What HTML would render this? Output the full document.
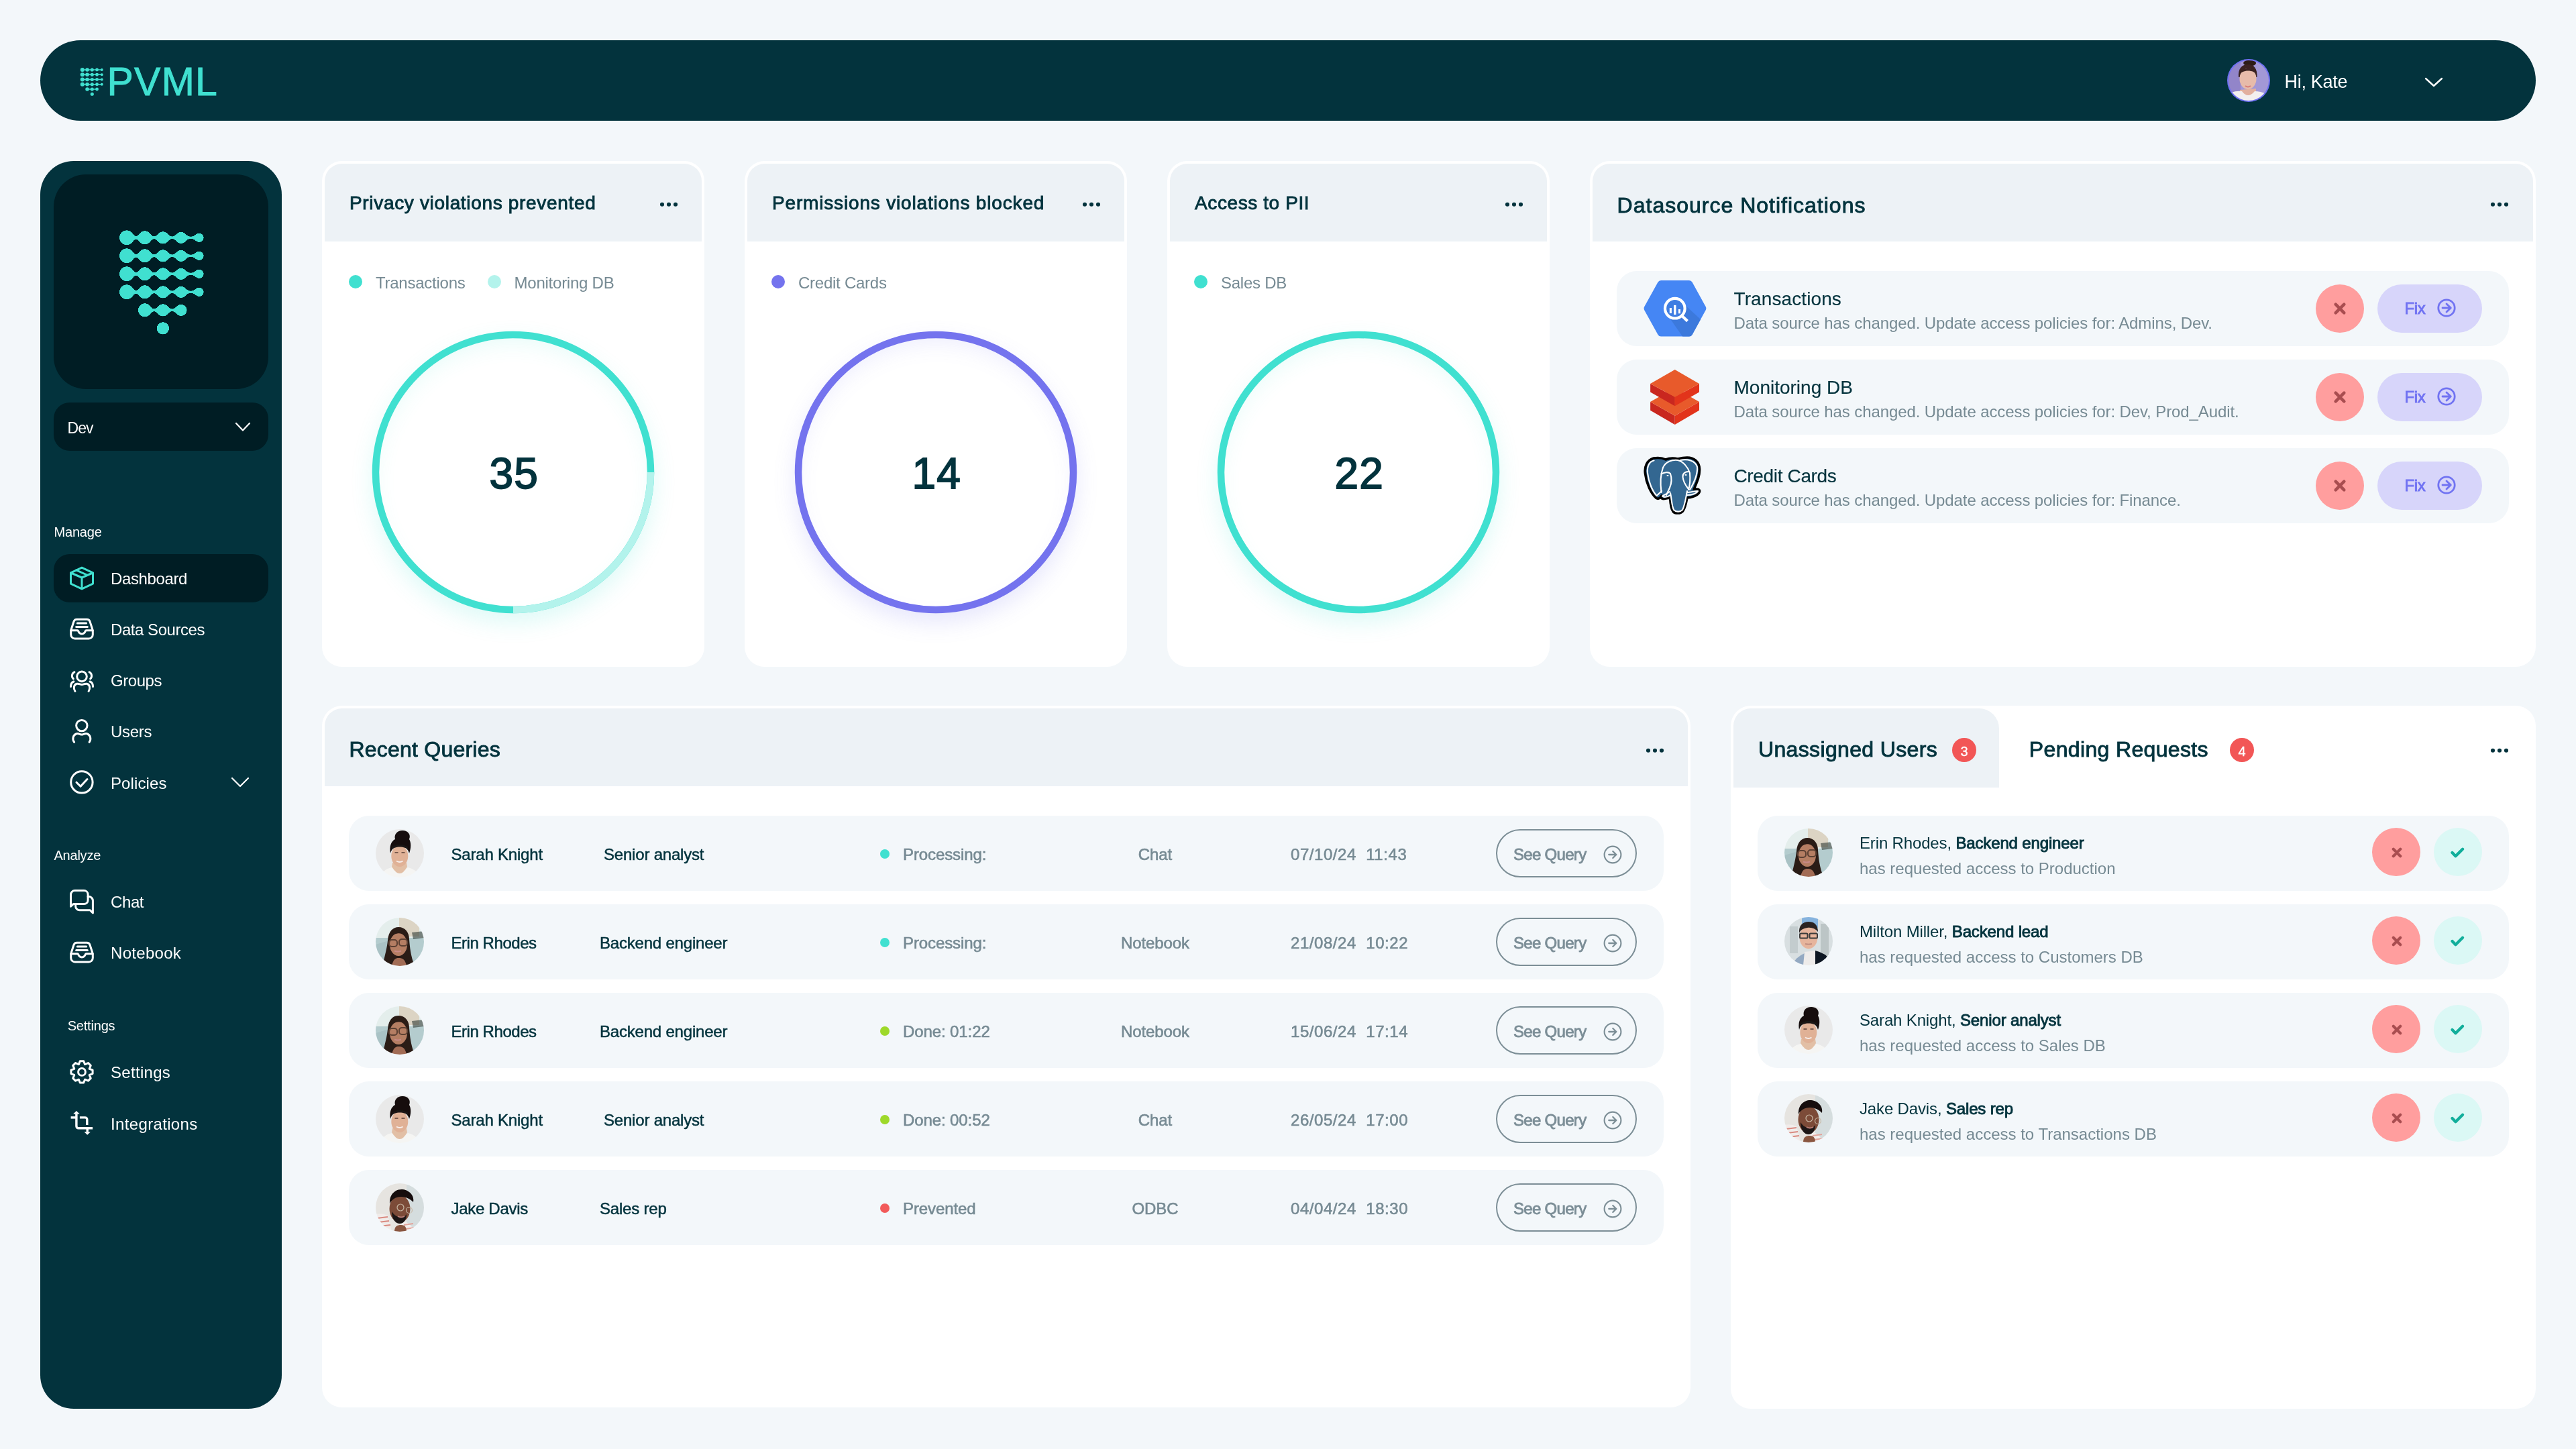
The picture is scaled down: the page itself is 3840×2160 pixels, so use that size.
<!DOCTYPE html>
<html><head><meta charset="utf-8"><title>PVML Dashboard</title>
<style>
html,body{margin:0;padding:0;}
body{width:3840px;height:2160px;background:#F3F7FA;position:relative;overflow:hidden;font-family:"Liberation Sans", sans-serif;}
.t{position:absolute;line-height:1;white-space:nowrap;}
</style></head><body><div id="root" style="position:absolute;left:0;top:0;width:3840px;height:2160px;will-change:transform">
<div style="position:absolute;left:60px;top:60px;width:3720px;height:120px;background:#03333D;border-radius:60px;"></div>
<svg style="position:absolute;left:100px;top:90px;overflow:visible;" width="70" height="70" viewBox="0 0 70 70"><g><line x1="22.80" y1="14.00" x2="30.05" y2="14.00" stroke="#40E0D0" stroke-width="1.5"/><line x1="30.05" y1="14.00" x2="37.30" y2="14.00" stroke="#40E0D0" stroke-width="1.5"/><line x1="37.30" y1="14.00" x2="44.55" y2="14.00" stroke="#40E0D0" stroke-width="1.5"/><line x1="44.55" y1="14.00" x2="51.80" y2="14.00" stroke="#40E0D0" stroke-width="1.5"/><circle cx="22.80" cy="14.00" r="3.05" fill="#40E0D0"/><circle cx="30.05" cy="14.00" r="2.80" fill="#40E0D0"/><circle cx="37.30" cy="14.00" r="2.55" fill="#40E0D0"/><circle cx="44.55" cy="14.00" r="2.40" fill="#40E0D0"/><circle cx="51.80" cy="14.00" r="2.00" fill="#40E0D0"/><line x1="22.80" y1="21.25" x2="30.05" y2="21.25" stroke="#40E0D0" stroke-width="1.5"/><line x1="30.05" y1="21.25" x2="37.30" y2="21.25" stroke="#40E0D0" stroke-width="1.5"/><line x1="37.30" y1="21.25" x2="44.55" y2="21.25" stroke="#40E0D0" stroke-width="1.5"/><line x1="44.55" y1="21.25" x2="51.80" y2="21.25" stroke="#40E0D0" stroke-width="1.5"/><circle cx="22.80" cy="21.25" r="3.05" fill="#40E0D0"/><circle cx="30.05" cy="21.25" r="2.80" fill="#40E0D0"/><circle cx="37.30" cy="21.25" r="2.55" fill="#40E0D0"/><circle cx="44.55" cy="21.25" r="2.40" fill="#40E0D0"/><circle cx="51.80" cy="21.25" r="2.00" fill="#40E0D0"/><line x1="22.80" y1="28.50" x2="30.05" y2="28.50" stroke="#40E0D0" stroke-width="1.5"/><line x1="30.05" y1="28.50" x2="37.30" y2="28.50" stroke="#40E0D0" stroke-width="1.5"/><line x1="37.30" y1="28.50" x2="44.55" y2="28.50" stroke="#40E0D0" stroke-width="1.5"/><line x1="44.55" y1="28.50" x2="51.80" y2="28.50" stroke="#40E0D0" stroke-width="1.5"/><circle cx="22.80" cy="28.50" r="3.05" fill="#40E0D0"/><circle cx="30.05" cy="28.50" r="2.80" fill="#40E0D0"/><circle cx="37.30" cy="28.50" r="2.55" fill="#40E0D0"/><circle cx="44.55" cy="28.50" r="2.40" fill="#40E0D0"/><circle cx="51.80" cy="28.50" r="2.00" fill="#40E0D0"/><line x1="22.80" y1="35.75" x2="30.05" y2="35.75" stroke="#40E0D0" stroke-width="1.5"/><line x1="30.05" y1="35.75" x2="37.30" y2="35.75" stroke="#40E0D0" stroke-width="1.5"/><line x1="37.30" y1="35.75" x2="44.55" y2="35.75" stroke="#40E0D0" stroke-width="1.5"/><line x1="44.55" y1="35.75" x2="51.80" y2="35.75" stroke="#40E0D0" stroke-width="1.5"/><circle cx="22.80" cy="35.75" r="3.05" fill="#40E0D0"/><circle cx="30.05" cy="35.75" r="2.80" fill="#40E0D0"/><circle cx="37.30" cy="35.75" r="2.55" fill="#40E0D0"/><circle cx="44.55" cy="35.75" r="2.40" fill="#40E0D0"/><circle cx="51.80" cy="35.75" r="2.00" fill="#40E0D0"/><line x1="30.05" y1="43.00" x2="37.30" y2="43.00" stroke="#40E0D0" stroke-width="1.5"/><line x1="37.30" y1="43.00" x2="44.55" y2="43.00" stroke="#40E0D0" stroke-width="1.5"/><circle cx="30.05" cy="43.00" r="2.80" fill="#40E0D0"/><circle cx="37.30" cy="43.00" r="2.55" fill="#40E0D0"/><circle cx="44.55" cy="43.00" r="2.40" fill="#40E0D0"/><circle cx="37.30" cy="50.25" r="2.55" fill="#40E0D0"/></g></svg>
<div class="t" style="left:159.50px;top:93.06px;font-size:59px;color:#40E0D0;letter-spacing:1.23px;-webkit-text-stroke:0.9px #40E0D0;">PVML</div>
<svg style="position:absolute;left:3320px;top:88px" width="64" height="64" viewBox="0 0 64 64"><defs><clipPath id="ck"><circle cx="32" cy="32" r="30"/></clipPath><filter id="fk"><feGaussianBlur stdDeviation="0.5"/></filter></defs><circle cx="32" cy="32" r="32" fill="#6F70F2"/><g clip-path="url(#ck)"><g filter="url(#fk)"><rect width="64" height="64" fill="#A398D6"/><rect width="20" height="64" fill="#9285C9"/><ellipse cx="33.6" cy="6" rx="9.5" ry="4.5" fill="#2E1A16"/><path d="M17 27 C16 14 22 8 31 8 C40 8 45 14 44.5 27Z" fill="#3A2420"/><path d="M19 46 L19 56 L43 56 L43 44Z" fill="#E2AF9E"/><ellipse cx="31" cy="29.5" rx="12.5" ry="15.6" fill="#E7BBAA"/><path d="M18.5 24 C21 16 40 15 44 24 L44 20 C40 12 22 12 18 21Z" fill="#3A2420"/><path d="M27 40 Q31 43 35 40" stroke="#D77C78" stroke-width="2" fill="none"/><path d="M2 64 L6 50 Q14 47 22 48 Q31 60 41 48 Q50 48 58 52 L62 64Z" fill="#F3EFEF"/></g></g></svg>
<div class="t" style="left:3405.50px;top:109.44px;font-size:27px;color:#FFFFFF;letter-spacing:-0.3px;">Hi, Kate</div>
<svg style="position:absolute;left:3614px;top:115px;overflow:visible;" width="28" height="16" viewBox="0 0 28 16"><path d="M2 2 L14 13 L26 2" fill="none" stroke="#fff" stroke-width="2.4" stroke-linecap="round" stroke-linejoin="round"/></svg>
<div style="position:absolute;left:60px;top:240px;width:360px;height:1860px;background:#03333D;border-radius:50px;"></div>
<div style="position:absolute;left:80px;top:260px;width:320px;height:320px;background:#001D24;border-radius:48px;"></div>
<svg style="position:absolute;left:140px;top:320px;overflow:visible;" width="200" height="200" viewBox="0 0 200 200"><defs><filter id="goo2" x="-20%" y="-20%" width="140%" height="140%"><feGaussianBlur stdDeviation="2.6"/><feColorMatrix values="1 0 0 0 0  0 1 0 0 0  0 0 1 0 0  0 0 0 24 -11"/></filter></defs><g filter="url(#goo2)"><line x1="48.90" y1="34.30" x2="75.90" y2="34.30" stroke="#40E0D0" stroke-width="4.0"/><line x1="75.90" y1="34.30" x2="102.90" y2="34.30" stroke="#40E0D0" stroke-width="4.0"/><line x1="102.90" y1="34.30" x2="129.90" y2="34.30" stroke="#40E0D0" stroke-width="4.0"/><line x1="129.90" y1="34.30" x2="156.90" y2="34.30" stroke="#40E0D0" stroke-width="4.0"/><circle cx="48.90" cy="34.30" r="11.00" fill="#40E0D0"/><circle cx="75.90" cy="34.30" r="10.20" fill="#40E0D0"/><circle cx="102.90" cy="34.30" r="9.40" fill="#40E0D0"/><circle cx="129.90" cy="34.30" r="8.90" fill="#40E0D0"/><circle cx="156.90" cy="34.30" r="7.00" fill="#40E0D0"/><line x1="48.90" y1="61.30" x2="75.90" y2="61.30" stroke="#40E0D0" stroke-width="4.0"/><line x1="75.90" y1="61.30" x2="102.90" y2="61.30" stroke="#40E0D0" stroke-width="4.0"/><line x1="102.90" y1="61.30" x2="129.90" y2="61.30" stroke="#40E0D0" stroke-width="4.0"/><line x1="129.90" y1="61.30" x2="156.90" y2="61.30" stroke="#40E0D0" stroke-width="4.0"/><circle cx="48.90" cy="61.30" r="11.00" fill="#40E0D0"/><circle cx="75.90" cy="61.30" r="10.20" fill="#40E0D0"/><circle cx="102.90" cy="61.30" r="9.40" fill="#40E0D0"/><circle cx="129.90" cy="61.30" r="8.90" fill="#40E0D0"/><circle cx="156.90" cy="61.30" r="7.00" fill="#40E0D0"/><line x1="48.90" y1="88.30" x2="75.90" y2="88.30" stroke="#40E0D0" stroke-width="4.0"/><line x1="75.90" y1="88.30" x2="102.90" y2="88.30" stroke="#40E0D0" stroke-width="4.0"/><line x1="102.90" y1="88.30" x2="129.90" y2="88.30" stroke="#40E0D0" stroke-width="4.0"/><line x1="129.90" y1="88.30" x2="156.90" y2="88.30" stroke="#40E0D0" stroke-width="4.0"/><circle cx="48.90" cy="88.30" r="11.00" fill="#40E0D0"/><circle cx="75.90" cy="88.30" r="10.20" fill="#40E0D0"/><circle cx="102.90" cy="88.30" r="9.40" fill="#40E0D0"/><circle cx="129.90" cy="88.30" r="8.90" fill="#40E0D0"/><circle cx="156.90" cy="88.30" r="7.00" fill="#40E0D0"/><line x1="48.90" y1="115.30" x2="75.90" y2="115.30" stroke="#40E0D0" stroke-width="4.0"/><line x1="75.90" y1="115.30" x2="102.90" y2="115.30" stroke="#40E0D0" stroke-width="4.0"/><line x1="102.90" y1="115.30" x2="129.90" y2="115.30" stroke="#40E0D0" stroke-width="4.0"/><line x1="129.90" y1="115.30" x2="156.90" y2="115.30" stroke="#40E0D0" stroke-width="4.0"/><circle cx="48.90" cy="115.30" r="11.00" fill="#40E0D0"/><circle cx="75.90" cy="115.30" r="10.20" fill="#40E0D0"/><circle cx="102.90" cy="115.30" r="9.40" fill="#40E0D0"/><circle cx="129.90" cy="115.30" r="8.90" fill="#40E0D0"/><circle cx="156.90" cy="115.30" r="7.00" fill="#40E0D0"/><line x1="75.90" y1="142.30" x2="102.90" y2="142.30" stroke="#40E0D0" stroke-width="4.0"/><line x1="102.90" y1="142.30" x2="129.90" y2="142.30" stroke="#40E0D0" stroke-width="4.0"/><circle cx="75.90" cy="142.30" r="10.20" fill="#40E0D0"/><circle cx="102.90" cy="142.30" r="9.40" fill="#40E0D0"/><circle cx="129.90" cy="142.30" r="8.90" fill="#40E0D0"/><circle cx="102.90" cy="169.30" r="9.40" fill="#40E0D0"/></g></svg>
<div style="position:absolute;left:80px;top:600px;width:320px;height:72px;background:#001D24;border-radius:24px;"></div>
<div class="t" style="left:100.50px;top:626.53px;font-size:23px;color:#FFFFFF;letter-spacing:-0.9px;">Dev</div>
<svg style="position:absolute;left:350px;top:629px;overflow:visible;" width="24" height="16" viewBox="0 0 24 16"><path d="M2 2 L12 12.5 L22 2" fill="none" stroke="#fff" stroke-width="2.2" stroke-linecap="round" stroke-linejoin="round"/></svg>
<div class="t" style="left:80.50px;top:783.37px;font-size:20px;color:#FFFFFF;letter-spacing:-0.2px;">Manage</div>
<div style="position:absolute;left:80px;top:826px;width:320px;height:72px;background:#001D24;border-radius:24px;"></div>
<svg style="position:absolute;left:104px;top:844px;overflow:visible" width="36" height="36" viewBox="0 0 36 36" fill="none" stroke="#40E0D0" stroke-width="3" stroke-linecap="round" stroke-linejoin="round"><path d="M18 2.2L34.5 9.9V26.1L18 33.8L1.5 26.1V9.9Z"/><path d="M1.8 10L18 17L34.2 10"/><path d="M18 17V33.5"/><path d="M9.6 5.9L25.6 13"/></svg>
<div class="t" style="left:165.00px;top:851.38px;font-size:24px;color:#FFFFFF;letter-spacing:-0.38px;">Dashboard</div>
<svg style="position:absolute;left:104px;top:920px;overflow:visible" width="36" height="36" viewBox="0 0 36 36" fill="none" stroke="#FFFFFF" stroke-width="3" stroke-linecap="round" stroke-linejoin="round"><path d="M10.5 3.3H25.5C27.8 3.3 29.3 4.5 30 6.5L33.6 17.5C34 18.6 34.3 19.6 34.3 20.8V26C34.3 29.4 31.6 32 28.3 32H7.7C4.4 32 1.7 29.4 1.7 26V20.8C1.7 19.6 2 18.6 2.4 17.5L6 6.5C6.7 4.5 8.2 3.3 10.5 3.3Z"/><path d="M1.8 19.8H11.5C12 19.8 12.5 20.2 12.7 20.8C13.5 23.2 15.5 24.9 18 24.9C20.5 24.9 22.5 23.2 23.3 20.8C23.5 20.2 24 19.8 24.5 19.8H34.2"/><path d="M11.3 9H24.7"/><path d="M9.7 14.5H26.3"/></svg>
<div class="t" style="left:165.00px;top:927.28px;font-size:24px;color:#FFFFFF;letter-spacing:-0.45px;">Data Sources</div>
<svg style="position:absolute;left:104px;top:996px;overflow:visible" width="36" height="36" viewBox="0 0 36 36" fill="none" stroke="#FFFFFF" stroke-width="3" stroke-linecap="round" stroke-linejoin="round"><circle cx="18" cy="12.4" r="7.3"/><path d="M7.9 34.5C5.2 30 5.8 24.8 10.5 23.3C13.5 22.5 15.5 24.6 18 24.6C20.5 24.6 22.5 22.5 25.5 23.3C30.2 24.8 30.8 30 28.1 34.5"/><path d="M6.9 5.9C3 7.5 2.2 13 5.3 15.9"/><path d="M29.1 5.9C33 7.5 33.8 13 30.7 15.9"/><path d="M5.9 20C3 21 1.5 24 1.5 27.5"/><path d="M30.1 20C33 21 34.5 24 34.5 27.5"/></svg>
<div class="t" style="left:165.00px;top:1003.18px;font-size:24px;color:#FFFFFF;letter-spacing:-0.45px;">Groups</div>
<svg style="position:absolute;left:104px;top:1072px;overflow:visible" width="36" height="36" viewBox="0 0 36 36" fill="none" stroke="#FFFFFF" stroke-width="3" stroke-linecap="round" stroke-linejoin="round"><circle cx="17.85" cy="9.6" r="8.2"/><path d="M6.6 34.3C3.5 30.5 4.5 23.5 10 21.7C13 20.8 15.5 23.1 17.85 23.1C20.2 23.1 22.7 20.8 25.7 21.7C31.2 23.5 32.2 30.5 29.1 34.3"/></svg>
<div class="t" style="left:165.00px;top:1079.38px;font-size:24px;color:#FFFFFF;letter-spacing:-0.3px;">Users</div>
<svg style="position:absolute;left:104px;top:1148px;overflow:visible" width="36" height="36" viewBox="0 0 36 36" fill="none" stroke="#FFFFFF" stroke-width="3" stroke-linecap="round" stroke-linejoin="round"><circle cx="17.9" cy="17.9" r="16.2"/><path d="M10 18.2L16.1 24.3L26 13.6"/></svg>
<div class="t" style="left:165.00px;top:1155.68px;font-size:24px;color:#FFFFFF;letter-spacing:0.1px;">Policies</div>
<svg style="position:absolute;left:344px;top:1158px;overflow:visible;" width="28" height="18" viewBox="0 0 28 18"><path d="M2 2 L14 14 L26 2" fill="none" stroke="#fff" stroke-width="2.2" stroke-linecap="round" stroke-linejoin="round"/></svg>
<div class="t" style="left:80.40px;top:1265.47px;font-size:20px;color:#FFFFFF;letter-spacing:-0.2px;">Analyze</div>
<svg style="position:absolute;left:104px;top:1326px;overflow:visible" width="36" height="36" viewBox="0 0 36 36" fill="none" stroke="#FFFFFF" stroke-width="3" stroke-linecap="round" stroke-linejoin="round"><path d="M1.5 25.2V7.5C1.5 4.2 4.2 1.6 7.5 1.6H21.2C24.5 1.6 27.1 4.2 27.1 7.5V15.7C27.1 19 24.5 21.6 21.2 21.6H5.3Z"/><path d="M27.1 10.6H28.4C31.7 10.6 34.4 13.3 34.4 16.6V35L30.2 30.8H14.7C11.4 30.8 8.7 28.2 8.7 24.9V21.6"/></svg>
<div class="t" style="left:165.00px;top:1333.48px;font-size:24px;color:#FFFFFF;letter-spacing:-0.4px;">Chat</div>
<svg style="position:absolute;left:104px;top:1402px;overflow:visible" width="36" height="36" viewBox="0 0 36 36" fill="none" stroke="#FFFFFF" stroke-width="3" stroke-linecap="round" stroke-linejoin="round"><path d="M10.5 3.3H25.5C27.8 3.3 29.3 4.5 30 6.5L33.6 17.5C34 18.6 34.3 19.6 34.3 20.8V26C34.3 29.4 31.6 32 28.3 32H7.7C4.4 32 1.7 29.4 1.7 26V20.8C1.7 19.6 2 18.6 2.4 17.5L6 6.5C6.7 4.5 8.2 3.3 10.5 3.3Z"/><path d="M1.8 19.8H11.5C12 19.8 12.5 20.2 12.7 20.8C13.5 23.2 15.5 24.9 18 24.9C20.5 24.9 22.5 23.2 23.3 20.8C23.5 20.2 24 19.8 24.5 19.8H34.2"/><path d="M11.3 9H24.7"/><path d="M9.7 14.5H26.3"/></svg>
<div class="t" style="left:165.00px;top:1409.48px;font-size:24px;color:#FFFFFF;letter-spacing:0.3px;">Notebook</div>
<div class="t" style="left:100.70px;top:1519.27px;font-size:20px;color:#FFFFFF;letter-spacing:-0.2px;">Settings</div>
<svg style="position:absolute;left:104px;top:1580px;overflow:visible" width="36" height="36" viewBox="0 0 36 36" fill="none" stroke="#FFFFFF" stroke-width="3" stroke-linecap="round" stroke-linejoin="round"><path d="M13.43 6.59 L15.31 1.82 L20.69 1.82 L22.57 6.59 L22.77 6.67 L27.47 4.63 L31.27 8.43 L29.23 13.13 L29.31 13.33 L34.08 15.21 L34.08 20.59 L29.31 22.47 L29.23 22.67 L31.27 27.37 L27.47 31.17 L22.77 29.13 L22.57 29.21 L20.69 33.98 L15.31 33.98 L13.43 29.21 L13.23 29.13 L8.53 31.17 L4.73 27.37 L6.77 22.67 L6.69 22.47 L1.92 20.59 L1.92 15.21 L6.69 13.33 L6.77 13.13 L4.73 8.43 L8.53 4.63 L13.23 6.67Z"/><circle cx="18" cy="17.9" r="5.4"/></svg>
<div class="t" style="left:165.00px;top:1587.28px;font-size:24px;color:#FFFFFF;letter-spacing:0.3px;">Settings</div>
<svg style="position:absolute;left:104px;top:1656px;overflow:visible" width="36" height="36" viewBox="0 0 36 36" fill="none" stroke="#FFFFFF" stroke-width="3" stroke-linecap="round" stroke-linejoin="round"><g stroke-width="3.4" stroke-linecap="butt"><path d="M9.9 4.4V22.8C9.9 24.5 11.2 25.8 12.9 25.8H34.1"/><path d="M1.6 9.9H9.9"/><path d="M14.9 9.9H22.8C24.5 9.9 25.8 11.2 25.8 12.9V21"/><path d="M26.2 25.8V31.5"/></g><path d="M5.1 4.7L9.9 -0.1L14.8 4.7Z" fill="#fff" stroke="none"/><path d="M21.5 31.2L26.2 35.8L30.9 31.2Z" fill="#fff" stroke="none"/></svg>
<div class="t" style="left:165.00px;top:1663.68px;font-size:24px;color:#FFFFFF;letter-spacing:0.35px;">Integrations</div>
<div style="position:absolute;left:480px;top:240px;width:570px;height:754px;background:#fff;border-radius:30px;"></div>
<div style="position:absolute;left:484px;top:244px;width:562px;height:116px;background:#EDF2F6;border-radius:26px 26px 0 0;"></div>
<div class="t" style="left:521.00px;top:289.10px;font-size:28px;color:#03333D;letter-spacing:0.67px;-webkit-text-stroke:0.9px #03333D;">Privacy violations prevented</div>
<svg style="position:absolute;left:984px;top:299px;overflow:visible;" width="28" height="10" viewBox="0 0 28 10"><circle cx="3.0" cy="5.7" r="3.05" fill="#03333D"/><circle cx="13.0" cy="5.7" r="3.05" fill="#03333D"/><circle cx="23.0" cy="5.7" r="3.05" fill="#03333D"/></svg>
<div style="position:absolute;left:520px;top:410px;width:20px;height:20px;background:#40E0D0;border-radius:50%;"></div>
<div class="t" style="left:560.00px;top:410.18px;font-size:24px;color:#768A93;letter-spacing:-0.25px;">Transactions</div>
<div style="position:absolute;left:726.6px;top:410px;width:20px;height:20px;background:#B3F3EC;border-radius:50%;"></div>
<div class="t" style="left:766.60px;top:410.18px;font-size:24px;color:#768A93;letter-spacing:-0.25px;">Monitoring DB</div>
<div style="position:absolute;left:555.2px;top:494px;width:420px;height:420px;border-radius:50%;box-shadow:0 14px 32px #40E0D02c, inset 0 14px 34px #40E0D024;"></div>
<svg style="position:absolute;left:550.2px;top:489px;overflow:visible;" width="430" height="430" viewBox="0 0 430 430"><circle cx="215" cy="215" r="205" fill="none" stroke="#40E0D0" stroke-width="10.5"/><path d="M420 215 A205 205 0 0 1 215 420" fill="none" stroke="#B3F3EC" stroke-width="10.5"/></svg>
<div class="t" style="left:616.20px;top:673.82px;font-size:64px;color:#03333D;letter-spacing:1px;-webkit-text-stroke:1.8px #03333D;width:300px;text-align:center;">35</div>
<div style="position:absolute;left:1110px;top:240px;width:570px;height:754px;background:#fff;border-radius:30px;"></div>
<div style="position:absolute;left:1114px;top:244px;width:562px;height:116px;background:#EDF2F6;border-radius:26px 26px 0 0;"></div>
<div class="t" style="left:1151.00px;top:289.10px;font-size:28px;color:#03333D;letter-spacing:0.83px;-webkit-text-stroke:0.9px #03333D;">Permissions violations blocked</div>
<svg style="position:absolute;left:1614px;top:299px;overflow:visible;" width="28" height="10" viewBox="0 0 28 10"><circle cx="3.0" cy="5.7" r="3.05" fill="#03333D"/><circle cx="13.0" cy="5.7" r="3.05" fill="#03333D"/><circle cx="23.0" cy="5.7" r="3.05" fill="#03333D"/></svg>
<div style="position:absolute;left:1150px;top:410px;width:20px;height:20px;background:#7473EE;border-radius:50%;"></div>
<div class="t" style="left:1190.00px;top:410.18px;font-size:24px;color:#768A93;letter-spacing:-0.25px;">Credit Cards</div>
<div style="position:absolute;left:1185.2px;top:494px;width:420px;height:420px;border-radius:50%;box-shadow:0 14px 32px #7473EE2c, inset 0 14px 34px #7473EE24;"></div>
<svg style="position:absolute;left:1180.2px;top:489px;overflow:visible;" width="430" height="430" viewBox="0 0 430 430"><circle cx="215" cy="215" r="205" fill="none" stroke="#7473EE" stroke-width="10.5"/></svg>
<div class="t" style="left:1246.20px;top:673.82px;font-size:64px;color:#03333D;letter-spacing:1px;-webkit-text-stroke:1.8px #03333D;width:300px;text-align:center;">14</div>
<div style="position:absolute;left:1740px;top:240px;width:570px;height:754px;background:#fff;border-radius:30px;"></div>
<div style="position:absolute;left:1744px;top:244px;width:562px;height:116px;background:#EDF2F6;border-radius:26px 26px 0 0;"></div>
<div class="t" style="left:1781.00px;top:289.10px;font-size:28px;color:#03333D;letter-spacing:0.6px;-webkit-text-stroke:0.9px #03333D;">Access to PII</div>
<svg style="position:absolute;left:2244px;top:299px;overflow:visible;" width="28" height="10" viewBox="0 0 28 10"><circle cx="3.0" cy="5.7" r="3.05" fill="#03333D"/><circle cx="13.0" cy="5.7" r="3.05" fill="#03333D"/><circle cx="23.0" cy="5.7" r="3.05" fill="#03333D"/></svg>
<div style="position:absolute;left:1780px;top:410px;width:20px;height:20px;background:#40E0D0;border-radius:50%;"></div>
<div class="t" style="left:1820.00px;top:410.18px;font-size:24px;color:#768A93;letter-spacing:-0.25px;">Sales DB</div>
<div style="position:absolute;left:1815.2px;top:494px;width:420px;height:420px;border-radius:50%;box-shadow:0 14px 32px #40E0D02c, inset 0 14px 34px #40E0D024;"></div>
<svg style="position:absolute;left:1810.2px;top:489px;overflow:visible;" width="430" height="430" viewBox="0 0 430 430"><circle cx="215" cy="215" r="205" fill="none" stroke="#40E0D0" stroke-width="10.5"/></svg>
<div class="t" style="left:1876.20px;top:673.82px;font-size:64px;color:#03333D;letter-spacing:1px;-webkit-text-stroke:1.8px #03333D;width:300px;text-align:center;">22</div>
<div style="position:absolute;left:2370px;top:240px;width:1410px;height:754px;background:#fff;border-radius:30px;"></div>
<div style="position:absolute;left:2374px;top:244px;width:1402px;height:116px;background:#EDF2F6;border-radius:26px 26px 0 0;"></div>
<div class="t" style="left:2410.60px;top:289.51px;font-size:32px;color:#03333D;letter-spacing:1.0px;-webkit-text-stroke:0.9px #03333D;">Datasource Notifications</div>
<svg style="position:absolute;left:3713px;top:299px;overflow:visible;" width="28" height="10" viewBox="0 0 28 10"><circle cx="3.0" cy="5.7" r="3.05" fill="#03333D"/><circle cx="13.0" cy="5.7" r="3.05" fill="#03333D"/><circle cx="23.0" cy="5.7" r="3.05" fill="#03333D"/></svg>
<div style="position:absolute;left:2410px;top:404px;width:1330px;height:112px;background:#F3F7FA;border-radius:30px;"></div>
<svg style="position:absolute;left:2445px;top:410px" width="105" height="100" viewBox="0 0 105 100"><defs><clipPath id="hexc"><path d="M31 7.9 H73 Q76 7.9 77.5 10.5 L97.6 47 Q99.1 49.7 97.6 52.4 L77.5 88.9 Q76 91.5 73 91.5 H31 Q28 91.5 26.5 88.9 L6.3 52.4 Q4.8 49.7 6.3 47 L26.5 10.5 Q28 7.9 31 7.9Z"/></clipPath></defs><g clip-path="url(#hexc)"><rect width="105" height="100" fill="#4586F4"/><path d="M66.3 44.2 L105 80 L105 100 L69 100 L44.9 65.6Z" fill="#3C79DC"/></g><circle cx="51.8" cy="49.7" r="12.8" fill="#3F7DE2"/><circle cx="51.8" cy="49.7" r="14.8" fill="none" stroke="#fff" stroke-width="4.2"/><path d="M63 61.5 L70.5 68.6" stroke="#fff" stroke-width="4.2" stroke-linecap="butt"/><rect x="43.8" y="49" width="3.1" height="8" fill="#fff"/><rect x="50" y="44.9" width="3.5" height="14.1" fill="#fff"/><rect x="57" y="51" width="3" height="6.3" fill="#fff"/></svg>
<div class="t" style="left:2584.50px;top:432.00px;font-size:28px;color:#03333D;letter-spacing:0.1px;-webkit-text-stroke:0.15px #03333D;">Transactions</div>
<div class="t" style="left:2584.50px;top:470.18px;font-size:24px;color:#768A93;letter-spacing:-0.1px;">Data source has changed. Update access policies for: Admins, Dev.</div>
<div style="position:absolute;left:3452px;top:424px;width:72px;height:72px;background:#FF9E9E;border-radius:50%;"></div>
<svg style="position:absolute;left:3476px;top:448px;overflow:visible;" width="24" height="24" viewBox="0 0 24 24"><path d="M5.7 5.7 L18.3 18.3 M18.3 5.7 L5.7 18.3" stroke="#A94D50" stroke-width="4.6" stroke-linecap="round"/></svg>
<div style="position:absolute;left:3544px;top:424px;width:156px;height:72px;background:#D7D5FA;border-radius:36px;"></div>
<div class="t" style="left:3584.50px;top:447.68px;font-size:24px;color:#7173F2;letter-spacing:-0.4px;-webkit-text-stroke:0.9px #7173F2;">Fix</div>
<svg style="position:absolute;left:3633.3px;top:445.4px;overflow:visible;" width="28" height="28" viewBox="0 0 28 28"><circle cx="14" cy="14" r="12.2" fill="none" stroke="#7173F2" stroke-width="2.8"/><path d="M8 14h12.3M14 8l6.3 6l-6.3 6" fill="none" stroke="#7173F2" stroke-width="2.8" stroke-linecap="round" stroke-linejoin="round"/></svg>
<div style="position:absolute;left:2410px;top:536px;width:1330px;height:112px;background:#F3F7FA;border-radius:30px;"></div>
<svg style="position:absolute;left:2450px;top:540px" width="95" height="105" viewBox="0 0 95 105"><path d="M10.1 59 L46.7 79.7 V93.1 L10.1 71.7Z" fill="#C9271F"/><path d="M46.7 79.7 L83 59 V71.7 L46.7 93.1Z" fill="#E2341B"/><path d="M46.7 38.3 L83 59 L46.7 79.7 L10.1 59Z" fill="#E85A2B"/><path d="M10.1 31.9 L46.7 51.8 V65.2 L10.1 44.6Z" fill="#C9271F"/><path d="M46.7 51.8 L83 31.9 V44.6 L46.7 65.2Z" fill="#E2341B"/><path d="M46.7 10.9 L83 31.9 L46.7 51.8 L10.1 31.9Z" fill="#E85A2B"/></svg>
<div class="t" style="left:2584.50px;top:564.00px;font-size:28px;color:#03333D;-webkit-text-stroke:0.15px #03333D;">Monitoring DB</div>
<div class="t" style="left:2584.50px;top:602.18px;font-size:24px;color:#768A93;letter-spacing:-0.1px;">Data source has changed. Update access policies for: Dev, Prod_Audit.</div>
<div style="position:absolute;left:3452px;top:556px;width:72px;height:72px;background:#FF9E9E;border-radius:50%;"></div>
<svg style="position:absolute;left:3476px;top:580px;overflow:visible;" width="24" height="24" viewBox="0 0 24 24"><path d="M5.7 5.7 L18.3 18.3 M18.3 5.7 L5.7 18.3" stroke="#A94D50" stroke-width="4.6" stroke-linecap="round"/></svg>
<div style="position:absolute;left:3544px;top:556px;width:156px;height:72px;background:#D7D5FA;border-radius:36px;"></div>
<div class="t" style="left:3584.50px;top:579.68px;font-size:24px;color:#7173F2;letter-spacing:-0.4px;-webkit-text-stroke:0.9px #7173F2;">Fix</div>
<svg style="position:absolute;left:3633.3px;top:577.4px;overflow:visible;" width="28" height="28" viewBox="0 0 28 28"><circle cx="14" cy="14" r="12.2" fill="none" stroke="#7173F2" stroke-width="2.8"/><path d="M8 14h12.3M14 8l6.3 6l-6.3 6" fill="none" stroke="#7173F2" stroke-width="2.8" stroke-linecap="round" stroke-linejoin="round"/></svg>
<div style="position:absolute;left:2410px;top:668px;width:1330px;height:112px;background:#F3F7FA;border-radius:30px;"></div>
<svg style="position:absolute;left:2445px;top:672px" width="100" height="100" viewBox="0 0 100 100"><path d="M20 11 C10 14 6 24 7.5 34 C9 48 16 64 24 70.5 C27 72.5 30 70 32 67 C30 70 32 72 36 71.5 L44.5 70 C45 78 45.5 86 49 90.5 C52 94 60 94 63.5 90 C67 86 68.5 78 70 70 C76 70 85 67 88 62 C90 58 86 56 80 57.5 C84 48 89 38 88.5 27 C88 16 80 10 70 10 C64 10 60 11 56 12 C50 10.5 44 10.5 38 13 C32 10 26 10 20 11Z" fill="#336791" stroke="#000" stroke-width="3.6" stroke-linejoin="round"/><g fill="none" stroke="#fff" stroke-width="2.1" stroke-linecap="round" stroke-linejoin="round"><path d="M20.5 14.5 C13 16 10 24 11 33 C12.5 46 18 60 24.5 67 C27 65 29.5 62 32 60"/><path d="M31.5 62 C30 50 30 36 34 25 C38 16 48 13 56 14 C64 16 71 24 74 33 C75 45 74 52 72 58"/><path d="M31.5 34.5 C36 32 42 31 45 34 C47 40 47 48 44 55 C42 60 40 63 39 66"/><path d="M72 31 C67 31 63 34 63.5 39 C64 45 68 52 72 57"/><path d="M44 61 C40 64 35 66 33 67.5 C35 69.5 40 69.5 45 66"/><path d="M70 62 C74 62 82 60 86 60 C84 64 76 66 70 66"/><path d="M45 63 C47 72 47 82 50 88 C54 92 60 91 63 88 C67 80 68 70 70 60"/><path d="M60 14 C70 12 82 14 85 24 C86 36 80 48 74 58"/></g><ellipse cx="41" cy="37" rx="1.6" ry="1" fill="#fff"/><ellipse cx="68" cy="36" rx="1.6" ry="1" fill="#fff"/></svg>
<div class="t" style="left:2584.50px;top:696.00px;font-size:28px;color:#03333D;letter-spacing:-0.35px;-webkit-text-stroke:0.15px #03333D;">Credit Cards</div>
<div class="t" style="left:2584.50px;top:734.18px;font-size:24px;color:#768A93;letter-spacing:-0.1px;">Data source has changed. Update access policies for: Finance.</div>
<div style="position:absolute;left:3452px;top:688px;width:72px;height:72px;background:#FF9E9E;border-radius:50%;"></div>
<svg style="position:absolute;left:3476px;top:712px;overflow:visible;" width="24" height="24" viewBox="0 0 24 24"><path d="M5.7 5.7 L18.3 18.3 M18.3 5.7 L5.7 18.3" stroke="#A94D50" stroke-width="4.6" stroke-linecap="round"/></svg>
<div style="position:absolute;left:3544px;top:688px;width:156px;height:72px;background:#D7D5FA;border-radius:36px;"></div>
<div class="t" style="left:3584.50px;top:711.68px;font-size:24px;color:#7173F2;letter-spacing:-0.4px;-webkit-text-stroke:0.9px #7173F2;">Fix</div>
<svg style="position:absolute;left:3633.3px;top:709.4px;overflow:visible;" width="28" height="28" viewBox="0 0 28 28"><circle cx="14" cy="14" r="12.2" fill="none" stroke="#7173F2" stroke-width="2.8"/><path d="M8 14h12.3M14 8l6.3 6l-6.3 6" fill="none" stroke="#7173F2" stroke-width="2.8" stroke-linecap="round" stroke-linejoin="round"/></svg>
<div style="position:absolute;left:480px;top:1052px;width:2040px;height:1046px;background:#fff;border-radius:30px;"></div>
<div style="position:absolute;left:484px;top:1056px;width:2032px;height:116px;background:#EDF2F6;border-radius:26px 26px 0 0;"></div>
<div class="t" style="left:520.50px;top:1100.91px;font-size:32px;color:#03333D;letter-spacing:0.22px;-webkit-text-stroke:0.9px #03333D;">Recent Queries</div>
<svg style="position:absolute;left:2454px;top:1113px;overflow:visible;" width="28" height="10" viewBox="0 0 28 10"><circle cx="3.0" cy="5.7" r="3.05" fill="#03333D"/><circle cx="13.0" cy="5.7" r="3.05" fill="#03333D"/><circle cx="23.0" cy="5.7" r="3.05" fill="#03333D"/></svg>
<div style="position:absolute;left:520px;top:1216px;width:1960px;height:112px;background:#F3F7FA;border-radius:30px;"></div>
<svg style="position:absolute;left:560px;top:1236px" width="72" height="72" viewBox="0 0 72 72"><defs><clipPath id="av100"><circle cx="36" cy="36" r="36"/></clipPath><filter id="fav100"><feGaussianBlur stdDeviation="0.5"/></filter></defs><g clip-path="url(#av100)"><g filter="url(#fav100)"><rect width="72" height="72" fill="#E9E9E9"/><path d="M8 72 Q10 60 24 57 L36 64 L48 57 Q62 60 66 72Z" fill="#F5F5F3"/><path d="M24 56 Q36 76 47 56 L46 50 L25 50Z" fill="#E2BFA5"/><path d="M22 36 C20 26 23 18 29 15 C27 8 32 2 40 2 C48 2 53 8 50 15 C53 20 53 28 50 36 C48 29 44 26 36 26 C28 26 24 29 22 36Z" fill="#141111"/><ellipse cx="35.8" cy="40" rx="12.5" ry="16" fill="#E0B196"/><path d="M23.5 31 C27 25 45 25 48.5 31 L48 27 C44 22 28 22 24 27Z" fill="#1A1513"/><path d="M28.5 35 h5 M38.5 35 h5" stroke="#5A4038" stroke-width="1.6"/><path d="M31 47.5 Q35.8 50.5 40.5 47.5" stroke="#F7EDEA" stroke-width="1.8" fill="none"/></g></g></svg>
<div class="t" style="left:672.50px;top:1262.18px;font-size:24px;color:#03333D;letter-spacing:-0.2px;-webkit-text-stroke:0.5px #03333D;">Sarah Knight</div>
<div class="t" style="left:900.00px;top:1262.18px;font-size:24px;color:#03333D;letter-spacing:-0.2px;-webkit-text-stroke:0.5px #03333D;">Senior analyst</div>
<div style="position:absolute;left:1312px;top:1266px;width:14px;height:14px;background:#40E0D0;border-radius:50%;"></div>
<div class="t" style="left:1346.00px;top:1262.18px;font-size:24px;color:#768A93;letter-spacing:-0.1px;-webkit-text-stroke:0.6px #768A93;">Processing:</div>
<div class="t" style="left:1622.00px;top:1262.18px;font-size:24px;color:#768A93;letter-spacing:-0.1px;-webkit-text-stroke:0.6px #768A93;width:200px;text-align:center;">Chat</div>
<div class="t" style="left:1924.00px;top:1262.18px;font-size:24px;color:#768A93;letter-spacing:0.55px;-webkit-text-stroke:0.6px #768A93;">07/10/24&nbsp;&nbsp;11:43</div>
<div style="position:absolute;left:2230.3px;top:1236.3px;width:209.3px;height:71.4px;box-sizing:border-box;border:2.1px solid #7C8E96;border-radius:36px;"></div>
<div class="t" style="left:2256.00px;top:1262.18px;font-size:24px;color:#7B8D96;letter-spacing:-0.7px;-webkit-text-stroke:0.8px #7B8D96;">See Query</div>
<svg style="position:absolute;left:2389.5px;top:1259.8px;overflow:visible;" width="28" height="28" viewBox="0 0 28 28"><circle cx="14" cy="14" r="12.4" fill="none" stroke="#7C8E96" stroke-width="2.1"/><path d="M8.3 14h11M14.3 9l5 5l-5 5" fill="none" stroke="#7C8E96" stroke-width="2.3" stroke-linecap="round" stroke-linejoin="round"/></svg>
<div style="position:absolute;left:520px;top:1348px;width:1960px;height:112px;background:#F3F7FA;border-radius:30px;"></div>
<svg style="position:absolute;left:560px;top:1368px" width="72" height="72" viewBox="0 0 72 72"><defs><clipPath id="av111"><circle cx="36" cy="36" r="36"/></clipPath><filter id="fav111"><feGaussianBlur stdDeviation="0.5"/></filter></defs><g clip-path="url(#av111)"><g filter="url(#fav111)"><rect width="72" height="72" fill="#B4CCCE"/><rect width="72" height="30" fill="#E4EEEC"/><rect x="35" y="0" width="30" height="28" fill="#DCD4C4"/><path d="M0 40 L20 34 L20 72 L0 72Z" fill="#A9C2C5"/><path d="M54 22 L72 20 L72 30 L56 32Z" fill="#2E3B36" opacity="0.6"/><path d="M10 72 C14 56 17 44 18 34 C19 20 26 14 34 14 C44 14 50 22 50 32 C51 44 52 56 58 72Z" fill="#2C1B18"/><ellipse cx="34" cy="40" rx="13" ry="17" fill="#B57E63"/><path d="M22 30 C26 22 42 20 48 30 L48 24 C42 16 26 16 21 25Z" fill="#2C1B18"/><rect x="20" y="33" width="12" height="10" rx="4" fill="none" stroke="#5B3F33" stroke-width="2"/><rect x="35" y="32" width="12" height="10" rx="4" fill="none" stroke="#5B3F33" stroke-width="2"/><path d="M28 49.5 Q33 51.5 38 49.5" stroke="#C98A88" stroke-width="2" fill="none"/><path d="M24 72 C26 62 30 60 34 60 C40 60 44 62 46 72Z" fill="#A26C55"/></g></g></svg>
<div class="t" style="left:672.50px;top:1394.18px;font-size:24px;color:#03333D;letter-spacing:-0.45px;-webkit-text-stroke:0.5px #03333D;">Erin Rhodes</div>
<div class="t" style="left:894.00px;top:1394.18px;font-size:24px;color:#03333D;letter-spacing:-0.2px;-webkit-text-stroke:0.5px #03333D;">Backend engineer</div>
<div style="position:absolute;left:1312px;top:1398px;width:14px;height:14px;background:#40E0D0;border-radius:50%;"></div>
<div class="t" style="left:1346.00px;top:1394.18px;font-size:24px;color:#768A93;letter-spacing:-0.1px;-webkit-text-stroke:0.6px #768A93;">Processing:</div>
<div class="t" style="left:1622.00px;top:1394.18px;font-size:24px;color:#768A93;letter-spacing:-0.1px;-webkit-text-stroke:0.6px #768A93;width:200px;text-align:center;">Notebook</div>
<div class="t" style="left:1924.00px;top:1394.18px;font-size:24px;color:#768A93;letter-spacing:0.55px;-webkit-text-stroke:0.6px #768A93;">21/08/24&nbsp;&nbsp;10:22</div>
<div style="position:absolute;left:2230.3px;top:1368.3px;width:209.3px;height:71.4px;box-sizing:border-box;border:2.1px solid #7C8E96;border-radius:36px;"></div>
<div class="t" style="left:2256.00px;top:1394.18px;font-size:24px;color:#7B8D96;letter-spacing:-0.7px;-webkit-text-stroke:0.8px #7B8D96;">See Query</div>
<svg style="position:absolute;left:2389.5px;top:1391.8px;overflow:visible;" width="28" height="28" viewBox="0 0 28 28"><circle cx="14" cy="14" r="12.4" fill="none" stroke="#7C8E96" stroke-width="2.1"/><path d="M8.3 14h11M14.3 9l5 5l-5 5" fill="none" stroke="#7C8E96" stroke-width="2.3" stroke-linecap="round" stroke-linejoin="round"/></svg>
<div style="position:absolute;left:520px;top:1480px;width:1960px;height:112px;background:#F3F7FA;border-radius:30px;"></div>
<svg style="position:absolute;left:560px;top:1500px" width="72" height="72" viewBox="0 0 72 72"><defs><clipPath id="av122"><circle cx="36" cy="36" r="36"/></clipPath><filter id="fav122"><feGaussianBlur stdDeviation="0.5"/></filter></defs><g clip-path="url(#av122)"><g filter="url(#fav122)"><rect width="72" height="72" fill="#B4CCCE"/><rect width="72" height="30" fill="#E4EEEC"/><rect x="35" y="0" width="30" height="28" fill="#DCD4C4"/><path d="M0 40 L20 34 L20 72 L0 72Z" fill="#A9C2C5"/><path d="M54 22 L72 20 L72 30 L56 32Z" fill="#2E3B36" opacity="0.6"/><path d="M10 72 C14 56 17 44 18 34 C19 20 26 14 34 14 C44 14 50 22 50 32 C51 44 52 56 58 72Z" fill="#2C1B18"/><ellipse cx="34" cy="40" rx="13" ry="17" fill="#B57E63"/><path d="M22 30 C26 22 42 20 48 30 L48 24 C42 16 26 16 21 25Z" fill="#2C1B18"/><rect x="20" y="33" width="12" height="10" rx="4" fill="none" stroke="#5B3F33" stroke-width="2"/><rect x="35" y="32" width="12" height="10" rx="4" fill="none" stroke="#5B3F33" stroke-width="2"/><path d="M28 49.5 Q33 51.5 38 49.5" stroke="#C98A88" stroke-width="2" fill="none"/><path d="M24 72 C26 62 30 60 34 60 C40 60 44 62 46 72Z" fill="#A26C55"/></g></g></svg>
<div class="t" style="left:672.50px;top:1526.18px;font-size:24px;color:#03333D;letter-spacing:-0.45px;-webkit-text-stroke:0.5px #03333D;">Erin Rhodes</div>
<div class="t" style="left:894.00px;top:1526.18px;font-size:24px;color:#03333D;letter-spacing:-0.2px;-webkit-text-stroke:0.5px #03333D;">Backend engineer</div>
<div style="position:absolute;left:1312px;top:1530px;width:14px;height:14px;background:#9ED92A;border-radius:50%;"></div>
<div class="t" style="left:1346.00px;top:1526.18px;font-size:24px;color:#768A93;letter-spacing:-0.1px;-webkit-text-stroke:0.6px #768A93;">Done: 01:22</div>
<div class="t" style="left:1622.00px;top:1526.18px;font-size:24px;color:#768A93;letter-spacing:-0.1px;-webkit-text-stroke:0.6px #768A93;width:200px;text-align:center;">Notebook</div>
<div class="t" style="left:1924.00px;top:1526.18px;font-size:24px;color:#768A93;letter-spacing:0.55px;-webkit-text-stroke:0.6px #768A93;">15/06/24&nbsp;&nbsp;17:14</div>
<div style="position:absolute;left:2230.3px;top:1500.3px;width:209.3px;height:71.4px;box-sizing:border-box;border:2.1px solid #7C8E96;border-radius:36px;"></div>
<div class="t" style="left:2256.00px;top:1526.18px;font-size:24px;color:#7B8D96;letter-spacing:-0.7px;-webkit-text-stroke:0.8px #7B8D96;">See Query</div>
<svg style="position:absolute;left:2389.5px;top:1523.8px;overflow:visible;" width="28" height="28" viewBox="0 0 28 28"><circle cx="14" cy="14" r="12.4" fill="none" stroke="#7C8E96" stroke-width="2.1"/><path d="M8.3 14h11M14.3 9l5 5l-5 5" fill="none" stroke="#7C8E96" stroke-width="2.3" stroke-linecap="round" stroke-linejoin="round"/></svg>
<div style="position:absolute;left:520px;top:1612px;width:1960px;height:112px;background:#F3F7FA;border-radius:30px;"></div>
<svg style="position:absolute;left:560px;top:1632px" width="72" height="72" viewBox="0 0 72 72"><defs><clipPath id="av133"><circle cx="36" cy="36" r="36"/></clipPath><filter id="fav133"><feGaussianBlur stdDeviation="0.5"/></filter></defs><g clip-path="url(#av133)"><g filter="url(#fav133)"><rect width="72" height="72" fill="#E9E9E9"/><path d="M8 72 Q10 60 24 57 L36 64 L48 57 Q62 60 66 72Z" fill="#F5F5F3"/><path d="M24 56 Q36 76 47 56 L46 50 L25 50Z" fill="#E2BFA5"/><path d="M22 36 C20 26 23 18 29 15 C27 8 32 2 40 2 C48 2 53 8 50 15 C53 20 53 28 50 36 C48 29 44 26 36 26 C28 26 24 29 22 36Z" fill="#141111"/><ellipse cx="35.8" cy="40" rx="12.5" ry="16" fill="#E0B196"/><path d="M23.5 31 C27 25 45 25 48.5 31 L48 27 C44 22 28 22 24 27Z" fill="#1A1513"/><path d="M28.5 35 h5 M38.5 35 h5" stroke="#5A4038" stroke-width="1.6"/><path d="M31 47.5 Q35.8 50.5 40.5 47.5" stroke="#F7EDEA" stroke-width="1.8" fill="none"/></g></g></svg>
<div class="t" style="left:672.50px;top:1658.18px;font-size:24px;color:#03333D;letter-spacing:-0.2px;-webkit-text-stroke:0.5px #03333D;">Sarah Knight</div>
<div class="t" style="left:900.00px;top:1658.18px;font-size:24px;color:#03333D;letter-spacing:-0.2px;-webkit-text-stroke:0.5px #03333D;">Senior analyst</div>
<div style="position:absolute;left:1312px;top:1662px;width:14px;height:14px;background:#9ED92A;border-radius:50%;"></div>
<div class="t" style="left:1346.00px;top:1658.18px;font-size:24px;color:#768A93;letter-spacing:-0.1px;-webkit-text-stroke:0.6px #768A93;">Done: 00:52</div>
<div class="t" style="left:1622.00px;top:1658.18px;font-size:24px;color:#768A93;letter-spacing:-0.1px;-webkit-text-stroke:0.6px #768A93;width:200px;text-align:center;">Chat</div>
<div class="t" style="left:1924.00px;top:1658.18px;font-size:24px;color:#768A93;letter-spacing:0.55px;-webkit-text-stroke:0.6px #768A93;">26/05/24&nbsp;&nbsp;17:00</div>
<div style="position:absolute;left:2230.3px;top:1632.3px;width:209.3px;height:71.4px;box-sizing:border-box;border:2.1px solid #7C8E96;border-radius:36px;"></div>
<div class="t" style="left:2256.00px;top:1658.18px;font-size:24px;color:#7B8D96;letter-spacing:-0.7px;-webkit-text-stroke:0.8px #7B8D96;">See Query</div>
<svg style="position:absolute;left:2389.5px;top:1655.8px;overflow:visible;" width="28" height="28" viewBox="0 0 28 28"><circle cx="14" cy="14" r="12.4" fill="none" stroke="#7C8E96" stroke-width="2.1"/><path d="M8.3 14h11M14.3 9l5 5l-5 5" fill="none" stroke="#7C8E96" stroke-width="2.3" stroke-linecap="round" stroke-linejoin="round"/></svg>
<div style="position:absolute;left:520px;top:1744px;width:1960px;height:112px;background:#F3F7FA;border-radius:30px;"></div>
<svg style="position:absolute;left:560px;top:1764px" width="72" height="72" viewBox="0 0 72 72"><defs><clipPath id="av144"><circle cx="36" cy="36" r="36"/></clipPath><filter id="fav144"><feGaussianBlur stdDeviation="0.5"/></filter></defs><g clip-path="url(#av144)"><g filter="url(#fav144)"><rect width="72" height="72" fill="#E6E4E0"/><rect x="46" y="0" width="26" height="72" fill="#D5DDDE"/><path d="M0 46 Q10 44 18 48 L24 72 H0Z" fill="#F1ECEA"/><path d="M2 52 L18 50 M4 58 L20 56 M6 64 L22 62" stroke="#D98A80" stroke-width="2"/><path d="M40 56 Q52 58 58 72 H30Z" fill="#F3EEEC"/><path d="M42 62 L56 60 M44 68 L58 66" stroke="#E2A59C" stroke-width="1.8"/><ellipse cx="36" cy="38" rx="15.5" ry="20" fill="#7C4B37"/><path d="M21 30 C20 16 30 8 40 9 C50 10 58 18 56 28 C52 24 46 20 38 20 C30 20 24 24 21 30Z" fill="#151111"/><path d="M24 42 C24 54 30 60 36 60 C42 60 46 54 46 46 C42 52 38 50 36 50 C32 50 28 48 24 42Z" fill="#1E1614"/><path d="M33 49 Q38 52 43 49" stroke="#B97E78" stroke-width="2" fill="none"/><circle cx="37" cy="36" r="5" fill="none" stroke="#C9B9A6" stroke-width="1.2"/><circle cx="50" cy="40" r="4.5" fill="none" stroke="#C9B9A6" stroke-width="1.2"/><path d="M28 72 C28 64 32 62 38 62 C44 62 46 66 46 72Z" fill="#8A563F"/></g></g></svg>
<div class="t" style="left:672.50px;top:1790.18px;font-size:24px;color:#03333D;letter-spacing:-0.3px;-webkit-text-stroke:0.5px #03333D;">Jake Davis</div>
<div class="t" style="left:894.00px;top:1790.18px;font-size:24px;color:#03333D;letter-spacing:-0.2px;-webkit-text-stroke:0.5px #03333D;">Sales rep</div>
<div style="position:absolute;left:1312px;top:1794px;width:14px;height:14px;background:#F25A5A;border-radius:50%;"></div>
<div class="t" style="left:1346.00px;top:1790.18px;font-size:24px;color:#768A93;letter-spacing:-0.1px;-webkit-text-stroke:0.6px #768A93;">Prevented</div>
<div class="t" style="left:1622.00px;top:1790.18px;font-size:24px;color:#768A93;letter-spacing:-0.1px;-webkit-text-stroke:0.6px #768A93;width:200px;text-align:center;">ODBC</div>
<div class="t" style="left:1924.00px;top:1790.18px;font-size:24px;color:#768A93;letter-spacing:0.55px;-webkit-text-stroke:0.6px #768A93;">04/04/24&nbsp;&nbsp;18:30</div>
<div style="position:absolute;left:2230.3px;top:1764.3px;width:209.3px;height:71.4px;box-sizing:border-box;border:2.1px solid #7C8E96;border-radius:36px;"></div>
<div class="t" style="left:2256.00px;top:1790.18px;font-size:24px;color:#7B8D96;letter-spacing:-0.7px;-webkit-text-stroke:0.8px #7B8D96;">See Query</div>
<svg style="position:absolute;left:2389.5px;top:1787.8px;overflow:visible;" width="28" height="28" viewBox="0 0 28 28"><circle cx="14" cy="14" r="12.4" fill="none" stroke="#7C8E96" stroke-width="2.1"/><path d="M8.3 14h11M14.3 9l5 5l-5 5" fill="none" stroke="#7C8E96" stroke-width="2.3" stroke-linecap="round" stroke-linejoin="round"/></svg>
<div style="position:absolute;left:2580px;top:1052px;width:1200px;height:1048px;background:#fff;border-radius:30px;"></div>
<div style="position:absolute;left:2584px;top:1056px;width:396px;height:118px;background:#EDF2F6;border-radius:26px 30px 0 0;"></div>
<div class="t" style="left:2621.00px;top:1101.01px;font-size:32px;color:#03333D;letter-spacing:0.35px;-webkit-text-stroke:0.9px #03333D;">Unassigned Users</div>
<div style="position:absolute;left:2910px;top:1100px;width:36px;height:36px;background:#F25656;border-radius:50%;"></div>
<div class="t" style="left:2910.00px;top:1109.57px;font-size:20px;color:#fff;-webkit-text-stroke:0.3px #fff;width:36px;text-align:center;">3</div>
<div class="t" style="left:3024.80px;top:1101.01px;font-size:32px;color:#03333D;letter-spacing:0.35px;-webkit-text-stroke:0.9px #03333D;">Pending Requests</div>
<div style="position:absolute;left:3324px;top:1100px;width:36px;height:36px;background:#F25656;border-radius:50%;"></div>
<div class="t" style="left:3324.00px;top:1109.57px;font-size:20px;color:#fff;-webkit-text-stroke:0.3px #fff;width:36px;text-align:center;">4</div>
<svg style="position:absolute;left:3713px;top:1113px;overflow:visible;" width="28" height="10" viewBox="0 0 28 10"><circle cx="3.0" cy="5.7" r="3.05" fill="#03333D"/><circle cx="13.0" cy="5.7" r="3.05" fill="#03333D"/><circle cx="23.0" cy="5.7" r="3.05" fill="#03333D"/></svg>
<div style="position:absolute;left:2620px;top:1216px;width:1120px;height:112px;background:#F3F7FA;border-radius:30px;"></div>
<svg style="position:absolute;left:2660px;top:1235px" width="72" height="72" viewBox="0 0 72 72"><defs><clipPath id="av164"><circle cx="36" cy="36" r="36"/></clipPath><filter id="fav164"><feGaussianBlur stdDeviation="0.5"/></filter></defs><g clip-path="url(#av164)"><g filter="url(#fav164)"><rect width="72" height="72" fill="#B4CCCE"/><rect width="72" height="30" fill="#E4EEEC"/><rect x="35" y="0" width="30" height="28" fill="#DCD4C4"/><path d="M0 40 L20 34 L20 72 L0 72Z" fill="#A9C2C5"/><path d="M54 22 L72 20 L72 30 L56 32Z" fill="#2E3B36" opacity="0.6"/><path d="M10 72 C14 56 17 44 18 34 C19 20 26 14 34 14 C44 14 50 22 50 32 C51 44 52 56 58 72Z" fill="#2C1B18"/><ellipse cx="34" cy="40" rx="13" ry="17" fill="#B57E63"/><path d="M22 30 C26 22 42 20 48 30 L48 24 C42 16 26 16 21 25Z" fill="#2C1B18"/><rect x="20" y="33" width="12" height="10" rx="4" fill="none" stroke="#5B3F33" stroke-width="2"/><rect x="35" y="32" width="12" height="10" rx="4" fill="none" stroke="#5B3F33" stroke-width="2"/><path d="M28 49.5 Q33 51.5 38 49.5" stroke="#C98A88" stroke-width="2" fill="none"/><path d="M24 72 C26 62 30 60 34 60 C40 60 44 62 46 72Z" fill="#A26C55"/></g></g></svg>
<div class="t" style="left:2772.00px;top:1244.68px;font-size:24px;color:#03333D;letter-spacing:-0.15px;">Erin Rhodes, <span style="-webkit-text-stroke:0.9px #03333D">Backend engineer</span></div>
<div class="t" style="left:2772.00px;top:1282.68px;font-size:24px;color:#768A93;">has requested access to Production</div>
<div style="position:absolute;left:3536px;top:1234px;width:72px;height:72px;background:#FF9E9E;border-radius:50%;"></div>
<svg style="position:absolute;left:3562.5px;top:1260.5px;overflow:visible;" width="20" height="20" viewBox="0 0 20 20"><path d="M4.8 4.8 L15.2 15.2 M15.2 4.8 L4.8 15.2" stroke="#A94D50" stroke-width="4.2" stroke-linecap="round"/></svg>
<div style="position:absolute;left:3628px;top:1234px;width:72px;height:72px;background:#DBF8F5;border-radius:50%;"></div>
<svg style="position:absolute;left:3650px;top:1258px;overflow:visible;" width="28" height="24" viewBox="0 0 28 24"><path d="M5.5 13 L10.5 18.2 L21 7.8" fill="none" stroke="#12AE9B" stroke-width="4.4" stroke-linecap="round" stroke-linejoin="round"/></svg>
<div style="position:absolute;left:2620px;top:1348px;width:1120px;height:112px;background:#F3F7FA;border-radius:30px;"></div>
<svg style="position:absolute;left:2660px;top:1367px" width="72" height="72" viewBox="0 0 72 72"><defs><clipPath id="av172"><circle cx="36" cy="36" r="36"/></clipPath><filter id="fav172"><feGaussianBlur stdDeviation="0.5"/></filter></defs><g clip-path="url(#av172)"><g filter="url(#fav172)"><rect width="72" height="72" fill="#D8DFE1"/><rect x="26" y="0" width="24" height="16" fill="#86B3DE"/><rect x="8" y="14" width="12" height="40" fill="#C3CCCE"/><rect x="54" y="10" width="12" height="50" fill="#BCC5C6"/><path d="M12 72 Q16 60 30 54 L32 72Z" fill="#93A9C2"/><path d="M28 72 L30 52 L48 50 L46 72Z" fill="#EDEBEA"/><path d="M46 72 L46 50 Q62 54 68 64 L66 72Z" fill="#111822"/><ellipse cx="36" cy="30" rx="13.5" ry="17.5" fill="#E6B49C"/><path d="M22 24 C21 12 28 7 36 7 C44 7 50 11 50 22 C46 17 40 15 34 16 C28 17 24 19 22 24Z" fill="#2A2220"/><rect x="23" y="24.5" width="11.5" height="7" rx="1.5" fill="none" stroke="#3A3A3A" stroke-width="2"/><rect x="37.5" y="24.5" width="11.5" height="7" rx="1.5" fill="none" stroke="#3A3A3A" stroke-width="2"/><path d="M31 40 Q36 41 41 40" stroke="#B9857A" stroke-width="1.5" fill="none"/></g></g></svg>
<div class="t" style="left:2772.00px;top:1376.68px;font-size:24px;color:#03333D;letter-spacing:-0.15px;">Milton Miller, <span style="-webkit-text-stroke:0.9px #03333D">Backend lead</span></div>
<div class="t" style="left:2772.00px;top:1414.68px;font-size:24px;color:#768A93;">has requested access to Customers DB</div>
<div style="position:absolute;left:3536px;top:1366px;width:72px;height:72px;background:#FF9E9E;border-radius:50%;"></div>
<svg style="position:absolute;left:3562.5px;top:1392.5px;overflow:visible;" width="20" height="20" viewBox="0 0 20 20"><path d="M4.8 4.8 L15.2 15.2 M15.2 4.8 L4.8 15.2" stroke="#A94D50" stroke-width="4.2" stroke-linecap="round"/></svg>
<div style="position:absolute;left:3628px;top:1366px;width:72px;height:72px;background:#DBF8F5;border-radius:50%;"></div>
<svg style="position:absolute;left:3650px;top:1390px;overflow:visible;" width="28" height="24" viewBox="0 0 28 24"><path d="M5.5 13 L10.5 18.2 L21 7.8" fill="none" stroke="#12AE9B" stroke-width="4.4" stroke-linecap="round" stroke-linejoin="round"/></svg>
<div style="position:absolute;left:2620px;top:1480px;width:1120px;height:112px;background:#F3F7FA;border-radius:30px;"></div>
<svg style="position:absolute;left:2660px;top:1499px" width="72" height="72" viewBox="0 0 72 72"><defs><clipPath id="av180"><circle cx="36" cy="36" r="36"/></clipPath><filter id="fav180"><feGaussianBlur stdDeviation="0.5"/></filter></defs><g clip-path="url(#av180)"><g filter="url(#fav180)"><rect width="72" height="72" fill="#E9E9E9"/><path d="M8 72 Q10 60 24 57 L36 64 L48 57 Q62 60 66 72Z" fill="#F5F5F3"/><path d="M24 56 Q36 76 47 56 L46 50 L25 50Z" fill="#E2BFA5"/><path d="M22 36 C20 26 23 18 29 15 C27 8 32 2 40 2 C48 2 53 8 50 15 C53 20 53 28 50 36 C48 29 44 26 36 26 C28 26 24 29 22 36Z" fill="#141111"/><ellipse cx="35.8" cy="40" rx="12.5" ry="16" fill="#E0B196"/><path d="M23.5 31 C27 25 45 25 48.5 31 L48 27 C44 22 28 22 24 27Z" fill="#1A1513"/><path d="M28.5 35 h5 M38.5 35 h5" stroke="#5A4038" stroke-width="1.6"/><path d="M31 47.5 Q35.8 50.5 40.5 47.5" stroke="#F7EDEA" stroke-width="1.8" fill="none"/></g></g></svg>
<div class="t" style="left:2772.00px;top:1508.68px;font-size:24px;color:#03333D;letter-spacing:-0.15px;">Sarah Knight, <span style="-webkit-text-stroke:0.9px #03333D">Senior analyst</span></div>
<div class="t" style="left:2772.00px;top:1546.68px;font-size:24px;color:#768A93;">has requested access to Sales DB</div>
<div style="position:absolute;left:3536px;top:1498px;width:72px;height:72px;background:#FF9E9E;border-radius:50%;"></div>
<svg style="position:absolute;left:3562.5px;top:1524.5px;overflow:visible;" width="20" height="20" viewBox="0 0 20 20"><path d="M4.8 4.8 L15.2 15.2 M15.2 4.8 L4.8 15.2" stroke="#A94D50" stroke-width="4.2" stroke-linecap="round"/></svg>
<div style="position:absolute;left:3628px;top:1498px;width:72px;height:72px;background:#DBF8F5;border-radius:50%;"></div>
<svg style="position:absolute;left:3650px;top:1522px;overflow:visible;" width="28" height="24" viewBox="0 0 28 24"><path d="M5.5 13 L10.5 18.2 L21 7.8" fill="none" stroke="#12AE9B" stroke-width="4.4" stroke-linecap="round" stroke-linejoin="round"/></svg>
<div style="position:absolute;left:2620px;top:1612px;width:1120px;height:112px;background:#F3F7FA;border-radius:30px;"></div>
<svg style="position:absolute;left:2660px;top:1631px" width="72" height="72" viewBox="0 0 72 72"><defs><clipPath id="av188"><circle cx="36" cy="36" r="36"/></clipPath><filter id="fav188"><feGaussianBlur stdDeviation="0.5"/></filter></defs><g clip-path="url(#av188)"><g filter="url(#fav188)"><rect width="72" height="72" fill="#E6E4E0"/><rect x="46" y="0" width="26" height="72" fill="#D5DDDE"/><path d="M0 46 Q10 44 18 48 L24 72 H0Z" fill="#F1ECEA"/><path d="M2 52 L18 50 M4 58 L20 56 M6 64 L22 62" stroke="#D98A80" stroke-width="2"/><path d="M40 56 Q52 58 58 72 H30Z" fill="#F3EEEC"/><path d="M42 62 L56 60 M44 68 L58 66" stroke="#E2A59C" stroke-width="1.8"/><ellipse cx="36" cy="38" rx="15.5" ry="20" fill="#7C4B37"/><path d="M21 30 C20 16 30 8 40 9 C50 10 58 18 56 28 C52 24 46 20 38 20 C30 20 24 24 21 30Z" fill="#151111"/><path d="M24 42 C24 54 30 60 36 60 C42 60 46 54 46 46 C42 52 38 50 36 50 C32 50 28 48 24 42Z" fill="#1E1614"/><path d="M33 49 Q38 52 43 49" stroke="#B97E78" stroke-width="2" fill="none"/><circle cx="37" cy="36" r="5" fill="none" stroke="#C9B9A6" stroke-width="1.2"/><circle cx="50" cy="40" r="4.5" fill="none" stroke="#C9B9A6" stroke-width="1.2"/><path d="M28 72 C28 64 32 62 38 62 C44 62 46 66 46 72Z" fill="#8A563F"/></g></g></svg>
<div class="t" style="left:2772.00px;top:1640.68px;font-size:24px;color:#03333D;letter-spacing:-0.15px;">Jake Davis, <span style="-webkit-text-stroke:0.9px #03333D">Sales rep</span></div>
<div class="t" style="left:2772.00px;top:1678.68px;font-size:24px;color:#768A93;">has requested access to Transactions DB</div>
<div style="position:absolute;left:3536px;top:1630px;width:72px;height:72px;background:#FF9E9E;border-radius:50%;"></div>
<svg style="position:absolute;left:3562.5px;top:1656.5px;overflow:visible;" width="20" height="20" viewBox="0 0 20 20"><path d="M4.8 4.8 L15.2 15.2 M15.2 4.8 L4.8 15.2" stroke="#A94D50" stroke-width="4.2" stroke-linecap="round"/></svg>
<div style="position:absolute;left:3628px;top:1630px;width:72px;height:72px;background:#DBF8F5;border-radius:50%;"></div>
<svg style="position:absolute;left:3650px;top:1654px;overflow:visible;" width="28" height="24" viewBox="0 0 28 24"><path d="M5.5 13 L10.5 18.2 L21 7.8" fill="none" stroke="#12AE9B" stroke-width="4.4" stroke-linecap="round" stroke-linejoin="round"/></svg>
</div><script>(function(){var w=window.innerWidth;if(w&&Math.abs(w-3840)>2){var r=document.getElementById('root');var k=w/3840;r.style.transformOrigin='0 0';r.style.transform='scale('+k+')';document.body.style.width=w+'px';document.body.style.height=(2160*k)+'px';}})();</script></body></html>
